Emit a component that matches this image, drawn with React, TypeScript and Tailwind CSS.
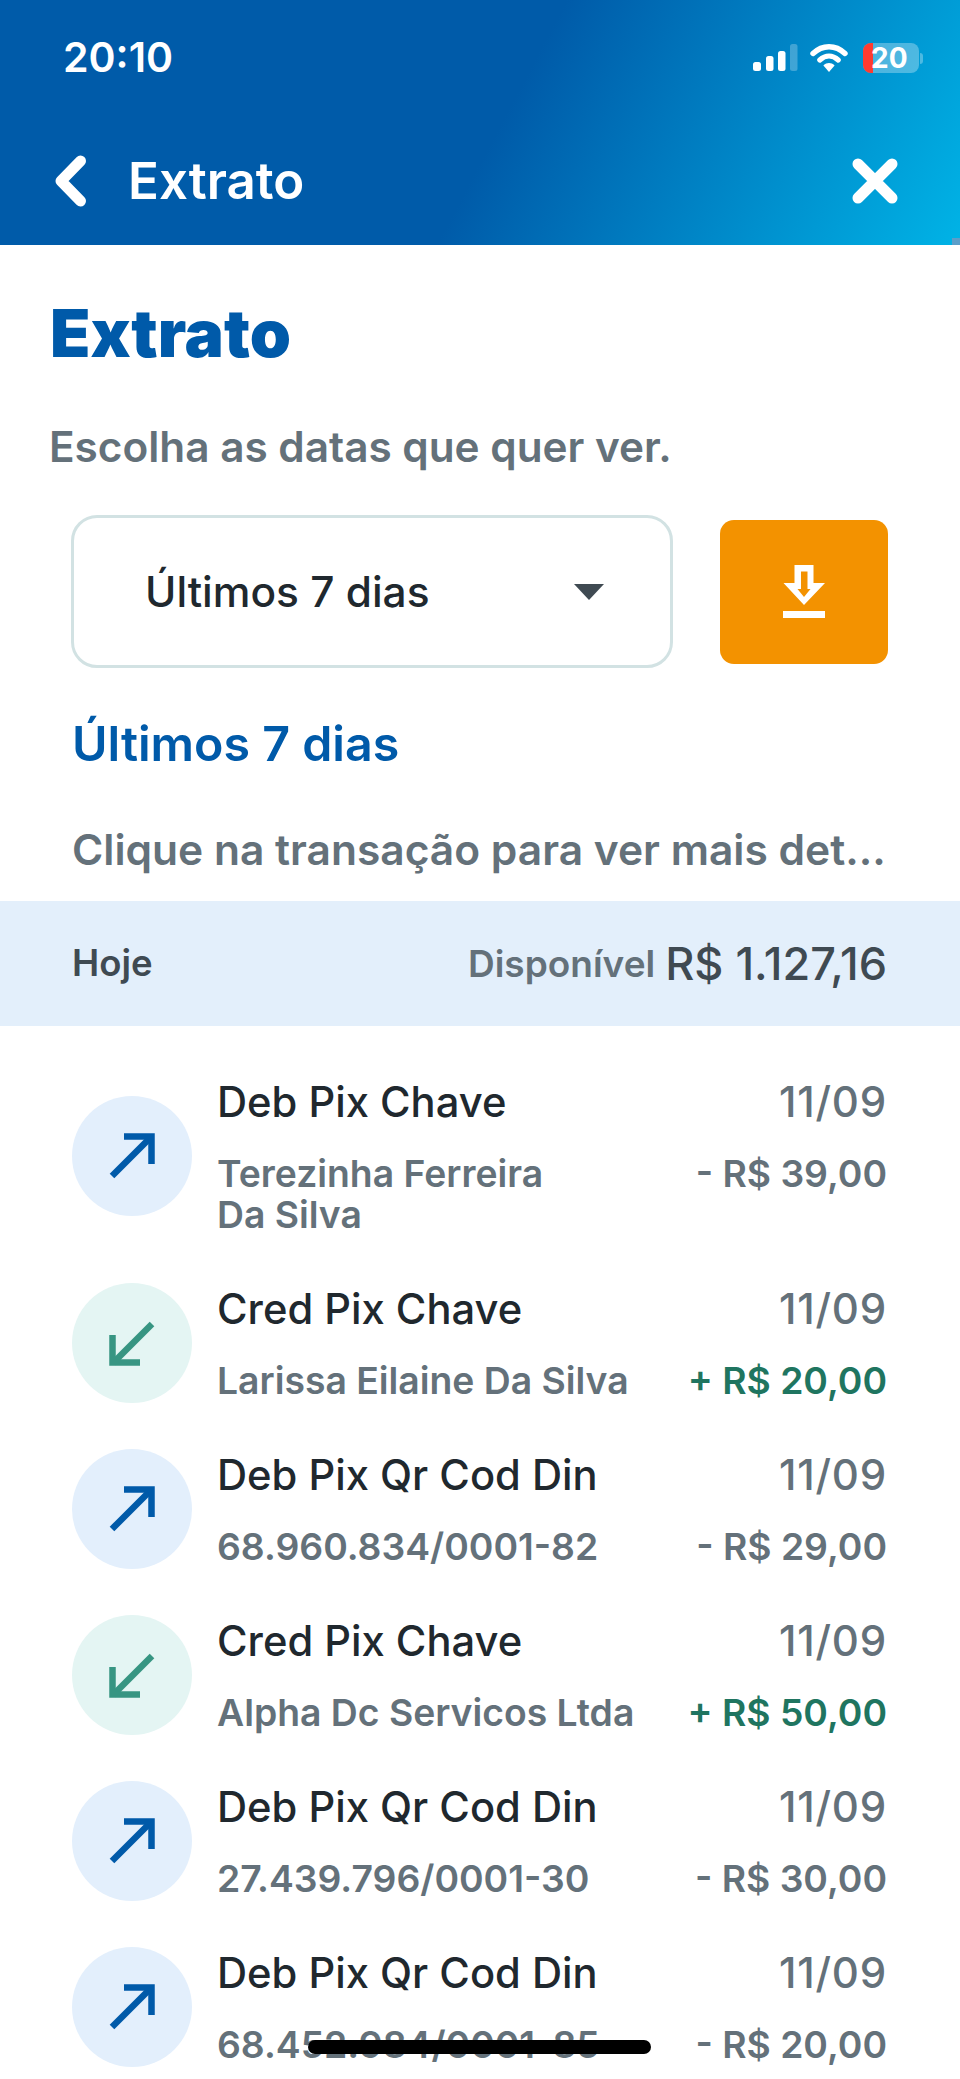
type Transaction = {
    title: string;
    detail: string;
    amount: string;
    credit?: boolean;
};

const transactions: Transaction[] = [
    { title: "Deb Pix Chave", detail: "Terezinha Ferreira\nDa Silva", amount: "- R$ 39,00" },
    { title: "Cred Pix Chave", detail: "Larissa Eilaine Da Silva", amount: "+ R$ 20,00", credit: true },
    { title: "Deb Pix Qr Cod Din", detail: "68.960.834/0001-82", amount: "- R$ 29,00" },
    { title: "Cred Pix Chave", detail: "Alpha Dc Servicos Ltda", amount: "+ R$ 50,00", credit: true },
    { title: "Deb Pix Qr Cod Din", detail: "27.439.796/0001-30", amount: "- R$ 30,00" },
    { title: "Deb Pix Qr Cod Din", detail: "68.452.984/0001-85", amount: "- R$ 20,00" },
];

function StatusIcons() {
    return (
        <div className="flex items-center">
            <svg width="46" height="30" viewBox="0 0 46 30" className="mt-[1px]">
                <rect x="0" y="18" width="8" height="9" rx="2.5" fill="#fff" />
                <rect x="13" y="12" width="7.5" height="15" rx="2.5" fill="#fff" />
                <rect x="25" y="7" width="7.5" height="20" rx="2.5" fill="#fff" />
                <rect x="37" y="0" width="7.5" height="27" rx="2.5" fill="#fff" opacity="0.25" />
            </svg>
            <svg width="38" height="30" viewBox="0 0 38 30" className="ml-[11px]">
                <path d="M3 10.5C12.5 1.5 25.5 1.5 35 10.5" fill="none" stroke="#fff" strokeWidth="5.4" strokeLinecap="round" />
                <path d="M9.8 17C15.500 11.800 22.500 11.800 28.200 17" fill="none" stroke="#fff" strokeWidth="5.2" strokeLinecap="round" />
                <path d="M13.4 22.4C17 19.2 21 19.2 24.6 22.4L19 29Z" fill="#fff" />
            </svg>
            <div className="relative ml-[15px] flex h-[30px] w-[56px] rounded-[8px] bg-white/30">
                <div className="h-full w-[10px] rounded-l-[8px] bg-[#ff3b30]" />
                <span className="absolute left-[8px] top-[1px] text-[28px] font-bold leading-[28px] text-white">20</span>
            </div>
            <div className="ml-[1px] h-[11px] w-[3px] rounded-r-full bg-white/30" />
        </div>
    );
}

function ArrowIcon({ credit }: { credit?: boolean }) {
    if (credit) {
        return (
            <div className="flex h-[120px] w-[120px] shrink-0 items-center justify-center rounded-full bg-[#e4f5f3]">
                <svg width="120" height="120" viewBox="0 0 120 120" fill="none" stroke="#379582" strokeWidth="6.5">
                    <path d="M80 41L41 80" />
                    <path d="M40.5 52V79.5H68" />
                </svg>
            </div>
        );
    }
    return (
        <div className="flex h-[120px] w-[120px] shrink-0 items-center justify-center rounded-full bg-[#e3effc]">
            <svg width="120" height="120" viewBox="0 0 120 120" fill="none" stroke="#005aa9" strokeWidth="6.5">
                <path d="M40 80L79 41" />
                <path d="M52 40.5H79.5V68" />
            </svg>
        </div>
    );
}

function TransactionRow({ item }: { item: Transaction }) {
    return (
        <div className="flex items-center gap-[25px] py-[20.5px] pl-[72px] pr-[73px]">
            <ArrowIcon credit={item.credit} />
            <div className="min-w-0 flex-1 pb-[4px] pt-[5px]">
                <div className="flex items-center justify-between">
                    <span className="text-[41.7px] font-medium leading-[48px] text-[#20282e]">{item.title}</span>
                    <span className="text-[42px] font-medium tracking-[0.8px] leading-[48px] text-[#64717a]">11/09</span>
                </div>
                <div className="mt-[27px] flex items-start justify-between gap-[20px]">
                    <span className="whitespace-pre-line text-[37.3px] font-semibold leading-[41px] text-[#64717a]">{item.detail}</span>
                    <span
                        className={`whitespace-nowrap text-[37.3px] font-semibold leading-[41px] ${
                            item.credit ? "text-[#1f7560]" : "text-[#64717a]"
                        }`}
                    >
                        {item.amount}
                    </span>
                </div>
            </div>
        </div>
    );
}

export default function App() {
    return (
        <div className="relative h-[2079px] w-[960px] overflow-hidden bg-white font-['Inter',sans-serif]">
            <header className="relative h-[245px] bg-[linear-gradient(118deg,#005ba9_0%,#005ba9_52%,#00b3e6_100%)]">
                <div className="flex h-[116px] items-center justify-between pl-[63px] pr-[37px]">
                    <span className="text-[41px] font-semibold text-white">20:10</span>
                    <StatusIcons />
                </div>
                <div className="flex h-[129px] items-center justify-between pl-[55px] pr-[62px]">
                    <div className="flex items-center">
                        <svg width="32" height="52" viewBox="0 0 32 52" fill="none" stroke="#fff" strokeWidth="11" strokeLinecap="round" strokeLinejoin="round">
                            <path d="M25.5 6L6 26L25.5 46" />
                        </svg>
                        <span className="ml-[41px] text-[51px] font-semibold leading-none text-white">Extrato</span>
                    </div>
                    <svg width="46" height="46" viewBox="0 0 46 46" fill="none" stroke="#fff" strokeWidth="11" strokeLinecap="round">
                        <path d="M6 6L40 40M40 6L6 40" />
                    </svg>
                </div>
                <div className="absolute bottom-0 right-0 h-[7px] w-[8px] bg-[#5b9ec9]" />
            </header>

            <main>
                <h1 className="ml-[50px] mt-[50px] text-[66px] font-black leading-[76px] text-[#005aa9]">Extrato</h1>
                <p className="ml-[49px] mt-[52px] text-[42.3px] font-semibold leading-[48px] text-[#64717a]">Escolha as datas que quer ver.</p>

                <div className="mt-[44px] flex items-center gap-[47px] pl-[71px]">
                    <div className="flex h-[153px] w-[602px] items-center justify-between rounded-[26px] border-[3px] border-[#d2e2e3] pl-[71px] pr-[66px]">
                        <span className="text-[42.4px] font-medium text-[#20282e]">Últimos 7 dias</span>
                        <div className="h-0 w-0 border-x-[15px] border-t-[16px] border-x-transparent border-t-[#3f4a52]" />
                    </div>
                    <button className="flex h-[144px] w-[168px] items-center justify-center rounded-[14px] bg-[#f39200]">
                        <svg width="42" height="54" viewBox="0 0 42 54" fill="#fff">
                            <path fillRule="evenodd" d="M11.5 0H30.5V18H42L21 40L0.5 18H11.5ZM18 6.500V24H14.500L21 32L27.500 24H24.500V6.500Z" />
                            <rect x="0" y="46" width="42" height="7" />
                        </svg>
                    </button>
                </div>

                <h2 className="ml-[72px] mt-[48px] text-[48.3px] font-semibold leading-[56px] text-[#005aa9]">Últimos 7 dias</h2>
                <p className="ml-[72px] mt-[54px] whitespace-nowrap text-[42.5px] font-semibold leading-[48px] text-[#64717a]">Clique na transação para ver mais det...</p>

                <div className="mt-[27px] flex h-[125px] items-center justify-between bg-[#e3effb] pl-[72px] pr-[73px]">
                    <span className="text-[36.5px] font-semibold text-[#3f4a52]">Hoje</span>
                    <div className="flex items-center gap-[10px]">
                        <span className="text-[37px] font-semibold text-[#64717a]">Disponível</span>
                        <span className="text-[45px] font-medium text-[#3f4a52]">R$ 1.127,16</span>
                    </div>
                </div>

                <div className="pt-[26.5px]">
                    {transactions.map((item, index) => (
                        <TransactionRow key={index} item={item} />
                    ))}
                </div>
            </main>

            <div className="absolute bottom-[25px] left-[308px] h-[14px] w-[343px] rounded-full bg-black" />
        </div>
    );
}
